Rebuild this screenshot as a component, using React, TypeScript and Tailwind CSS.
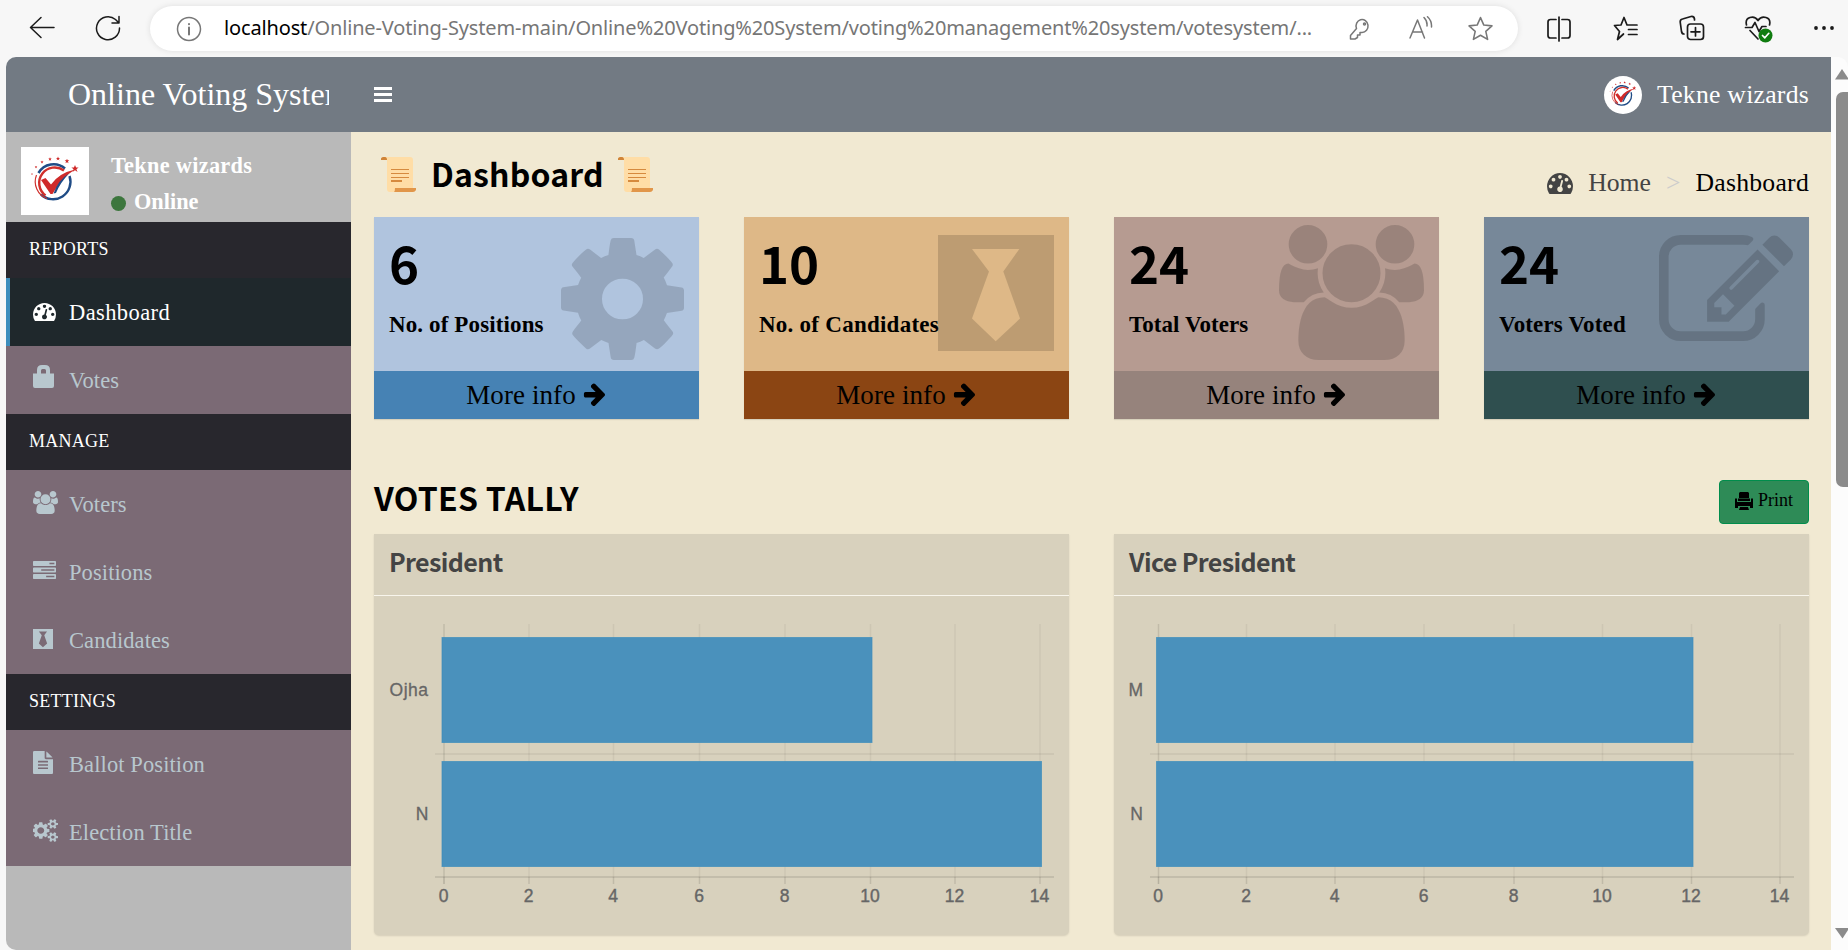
import React from "react";

const P = {
  users:
    "M657 896q-162 5-265 128h-134q-82 0-138-40.5t-56-118.5q0-353 124-353 6 0 43.5 21t97.5 42.5 119 21.5q67 0 133-23-5 37-5 66 0 139 81 256zm1071 637q0 120-73 189.5t-194 69.5h-874q-121 0-194-69.5t-73-189.5q0-53 3.5-103.5t14-109 26.5-108.5 43-97.5 62-81 85.5-53.5 111.5-20q10 0 43 21.5t73 48 107 48 135 21.5 135-21.5 107-48 73-48 43-21.5q61 0 111.5 20t85.5 53.5 62 81 43 97.5 26.5 108.5 14 109 3.5 103.5zm-1024-1277q0 106-75 181t-181 75-181-75-75-181 75-181 181-75 181 75 75 181zm704 384q0 159-112.5 271.5t-271.5 112.5-271.5-112.5-112.5-271.5 112.5-271.5 271.5-112.5 271.5 112.5 112.5 271.5zm576 225q0 78-56 118.5t-138 40.5h-134q-103-123-265-128 81-117 81-256 0-29-5-66 66 23 133 23 59 0 119-21.5t97.5-42.5 43.5-21q124 0 124 353zm-128-609q0 106-75 181t-181 75-181-75-75-181 75-181 181-75 181 75 75 181z",
  edit:
    "M888 1184l116-116-152-152-116 116v56h96v96h56zm440-720q-16-16-33 1l-350 350q-17 17-1 33t33-1l350-350q17-17 1-33zm80 594v190q0 119-84.5 203.5t-203.5 84.5h-832q-119 0-203.5-84.5t-84.5-203.5v-832q0-119 84.5-203.5t203.5-84.5h832q63 0 117 25 15 7 18 23 3 17-9 29l-49 49q-14 14-32 8-23-6-45-6h-832q-66 0-113 47t-47 113v832q0 66 47 113t113 47h832q66 0 113-47t47-113v-126q0-13 9-22l64-64q15-15 35-7t20 29zm-96-738l288 288-672 672h-288v-288zm444 132l-92 92-288-288 92-92q28-28 68-28t68 28l152 152q28 28 28 68t-28 68z",
  cog:
    "M1152 896q0-106-75-181t-181-75-181 75-75 181 75 181 181 75 181-75 75-181zm512-109v222q0 12-8 23t-20 13l-185 28q-19 54-39 91 35 50 107 138 10 12 10 25t-9 23q-27 37-99 108t-94 71q-12 0-26-9l-138-108q-44 23-91 38-16 136-29 186-7 28-36 28h-222q-14 0-24.5-8.5t-11.5-21.5l-28-184q-49-16-90-37l-141 107q-10 9-25 9-14 0-25-11-126-114-165-168-7-10-7-23 0-12 8-23 15-21 51-66.5t54-70.5q-27-50-41-99l-183-27q-13-2-21-12.5t-8-23.5v-222q0-12 8-23t19-13l186-28q14-46 39-92-40-57-107-138-10-12-10-24 0-10 9-23 26-36 98.5-107.5t94.5-71.5q13 0 26 10l138 107q44-23 91-38 16-136 29-186 7-28 36-28h222q14 0 24.5 8.5t11.5 21.5l28 184q49 16 90 37l142-107q9-9 24-9 13 0 25 10 129 119 165 170 7 8 7 22 0 12-8 23-15 21-51 66.5t-54 70.5q26 50 41 98l183 28q13 2 21 12.5t8 23.5z",
  gauge:
    "M384 1152q0-53-37.5-90.5t-90.5-37.5-90.5 37.5-37.5 90.5 37.5 90.5 90.5 37.5 90.5-37.5 37.5-90.5zm192-448q0-53-37.5-90.5t-90.5-37.5-90.5 37.5-37.5 90.5 37.5 90.5 90.5 37.5 90.5-37.5 37.5-90.5zm428 481l101-382q6-26-7.5-48.5t-38.5-29.5-48 6.5-30 39.5l-101 382q-60 5-107 43.5t-63 98.5q-20 77 20 146t117 89 146-20 89-117q16-60-6-117t-72-91zm660-33q0-53-37.5-90.5t-90.5-37.5-90.5 37.5-37.5 90.5 37.5 90.5 90.5 37.5 90.5-37.5 37.5-90.5zm-640-640q0-53-37.5-90.5t-90.5-37.5-90.5 37.5-37.5 90.5 37.5 90.5 90.5 37.5 90.5-37.5 37.5-90.5zm448 192q0-53-37.5-90.5t-90.5-37.5-90.5 37.5-37.5 90.5 37.5 90.5 90.5 37.5 90.5-37.5 37.5-90.5zm320 448q0 261-141 483-19 29-54 29h-1402q-35 0-54-29-141-221-141-483 0-182 71-348t191-286 286-191 348-71 348 71 286 191 191 286 71 348z",
  tasks:
    "M1024 1408h640v-128h-640v128zm-384-512h1024v-128h-1024v128zm640-512h384v-128h-384v128zm512 832v256q0 26-19 45t-45 19h-1664q-26 0-45-19t-19-45v-256q0-26 19-45t45-19h1664q26 0 45 19t19 45zm0-512v256q0 26-19 45t-45 19h-1664q-26 0-45-19t-19-45v-256q0-26 19-45t45-19h1664q26 0 45 19t19 45zm0-512v256q0 26-19 45t-45 19h-1664q-26 0-45-19t-19-45v-256q0-26 19-45t45-19h1664q26 0 45 19t19 45z",
  file:
    "M1596 476q14 14 28 36h-472v-472q22 14 36 28zm-476 164h544v1056q0 40-28 68t-68 28h-1344q-40 0-68-28t-28-68v-1600q0-40 28-68t68-28h800v544q0 40 28 68t68 28zm160 736v-64q0-14-9-23t-23-9h-704q-14 0-23 9t-9 23v64q0 14 9 23t23 9h704q14 0 23-9t9-23zm0-256v-64q0-14-9-23t-23-9h-704q-14 0-23 9t-9 23v64q0 14 9 23t23 9h704q14 0 23-9t9-23zm0-256v-64q0-14-9-23t-23-9h-704q-14 0-23 9t-9 23v64q0 14 9 23t23 9h704q14 0 23-9t9-23z",
  cogs:
    "M832 896q0-106-75-181t-181-75-181 75-75 181 75 181 181 75 181-75 75-181zm768 512q0-52-38-90t-90-38-90 38-38 90q0 53 37.5 90.5t90.5 37.5 90.5-37.5 37.5-90.5zm0-1024q0-52-38-90t-90-38-90 38-38 90q0 53 37.5 90.5t90.5 37.5 90.5-37.5 37.5-90.5zm-384 421v185q0 10-7 19.5t-16 10.5l-155 24q-11 35-32 76 34 48 90 115 7 11 7 20 0 12-7 19-23 30-82.5 89.5t-78.5 59.5q-11 0-21-7l-115-90q-37 19-77 31-11 108-23 155-7 24-30 24h-186q-11 0-20-7.5t-10-17.5l-23-153q-34-10-75-31l-118 89q-7 7-20 7-11 0-21-8-144-133-144-160 0-9 7-19 10-14 41-53t47-61q-23-44-35-82l-152-24q-10-1-17-9.5t-7-19.5v-185q0-10 7-19.5t16-10.5l155-24q11-35 32-76-34-48-90-115-7-11-7-20 0-12 7-20 22-30 82-89t79-59q11 0 21 7l115 90q34-18 77-32 11-108 23-154 7-24 30-24h186q11 0 20 7.5t10 17.5l23 153q34 10 75 31l118-89q8-7 20-7 11 0 21 8 144 133 144 160 0 8-7 19-12 16-42 54t-45 60q23 48 34 82l152 23q10 2 17 10.5t7 19.5zm640 533v140q0 16-149 31-12 27-30 52 51 113 51 138 0 4-4 7-122 71-124 71-8 0-46-47t-52-68q-20 2-30 2t-30-2q-14 21-52 68t-46 47q-2 0-124-71-4-3-4-7 0-25 51-138-18-25-30-52-149-15-149-31v-140q0-16 149-31 13-29 30-52-51-113-51-138 0-4 4-7 4-2 35-20t59-34 30-16q8 0 46 46.5t52 67.5q20-2 30-2t30 2q51-71 92-112l6-2q4 0 124 70 4 3 4 7 0 25-51 138 17 23 30 52 149 15 149 31zm0-1024v140q0 16-149 31-12 27-30 52 51 113 51 138 0 4-4 7-122 71-124 71-8 0-46-47t-52-68q-20 2-30 2t-30-2q-14 21-52 68t-46 47q-2 0-124-71-4-3-4-7 0-25 51-138-18-25-30-52-149-15-149-31v-140q0-16 149-31 13-29 30-52-51-113-51-138 0-4 4-7 4-2 35-20t59-34 30-16q8 0 46 46.5t52 67.5q20-2 30-2t30 2q51-71 92-112l6-2q4 0 124 70 4 3 4 7 0 25-51 138 17 23 30 52 149 15 149 31z",
  arrow:
    "M1600 960q0 54-37 91l-651 651q-39 37-91 37-51 0-90-37l-75-75q-38-38-38-91t38-91l293-293h-704q-52 0-84.5-37.5t-32.5-90.5v-128q0-53 32.5-90.5t84.5-37.5h704l-293-294q-38-36-38-90t38-90l75-75q38-38 90-38 53 0 91 38l651 651q37 35 37 90z",
  tie: "M0 0h116v116h-116zM34 14L51 36.5L34 83.5L57.700 106.300L82 83.500L65.300 36.500L81.300 14z",
  lock: "M4 8.500V5Q4 0 9 0H12Q17 0 17 5V8.500H21V21Q21 23 19 23H2Q0 23 0 21V8.500zM8 8.500H13V5.500Q13 4 11.500 4H9.500Q8 4 8 5.500z",
};

function Icon({ d, box, className }: { d: string; box: string; className: string }) {
  return (
    <svg viewBox={box} className={className} fill="currentColor" fillRule="evenodd" preserveAspectRatio="none">
      <path d={d} />
    </svg>
  );
}

function Logo({ className }: { className: string }) {
  const stars = [
    [11, 27, 1], [15, 20, 1.300], [21, 15, 1.600], [29, 12, 1.800], [37, 11.500, 2], [46, 14, 2.300], [54, 21.500, 3.600],
  ];
  return (
    <svg viewBox="0 0 68 68" className={className}>
      <rect width="68" height="68" fill="#fff" />
      <path d="M17.500 26A17.500 17.500 0 0 1 44 21.500" fill="none" stroke="#1f4c86" strokeWidth="2.600" />
      <path d="M48.500 29A17.500 17.500 0 0 1 20 47.500" fill="none" stroke="#1f4c86" strokeWidth="2.400" />
      <path d="M43 23.500A15.500 15.500 0 1 0 24.500 48.500" fill="none" stroke="#d0312d" strokeWidth="2.400" />
      <path d="M15.500 28A18 18 0 0 0 26 51.500" fill="none" stroke="#d0312d" strokeWidth="1.200" />
      <path d="M20 33l4.500-2 5.500 6.500Q38 26 54 22.500Q40 31 31.500 47h-2z" fill="#cf2a2a" />
      <path d="M32.500 46.500Q37 33 48 26.500Q39 36 35 46z" fill="#1f4c86" />
      {stars.map(([x, y, r]) => (
        <path
          key={x}
          d={`M${x} ${y - r}l${r * 0.3} ${r * 0.7}h${r * 0.7}l${-r * 0.6} ${r * 0.5}l${r * 0.3} ${r * 0.8}l${-r * 0.7} ${-r * 0.5}l${-r * 0.7} ${r * 0.5}l${r * 0.3} ${-r * 0.8}l${-r * 0.6} ${-r * 0.5}h${r * 0.7}z`}
          fill="#cf2a2a"
        />
      ))}
    </svg>
  );
}

function Scroll() {
  return (
    <svg viewBox="0 0 35 35" className="h-[35px] w-[35px] shrink-0">
      <path d="M0 3V1.500Q.5 0 2 0H5Q6.500 0 6.500 3z" fill="#d08438" />
      <path d="M5 0H29Q32 0 32 3V31.500H14V35H9Q6 35 6 32V3Q6 0 4 0z" fill="#ffdda6" />
      <path d="M14 31H35V33Q34 35 32 35H13Q14 34 14 31z" fill="#e1964a" />
      <path d="M10 12.500h18M10 16.500h18M10 20.500h18" stroke="#d68a3e" strokeWidth="1" />
      <path d="M10 24h11" stroke="#d68a3e" strokeWidth="2" />
    </svg>
  );
}

const line = { fill: "none", stroke: "currentColor", strokeWidth: 1.5, strokeLinecap: "round", strokeLinejoin: "round" } as const;
const STAR = "M12 1.500l3.200 7.200 7.800.8-5.900 5.200 1.700 7.800L12 18.500l-6.800 4 1.700-7.800L1 9.500l7.800-.8z";

function BrowserBar() {
  return (
    <div className="flex h-[57px] shrink-0 items-start bg-[#f7f7f7] text-[#1b1b1b]">
      <svg viewBox="0 0 26 26" className="mt-[15px] ml-[29px] h-[26px] w-[26px] shrink-0" {...line}>
        <path d="M1.500 12.500H25M12 2.500L1.500 12.500L12 22.500" />
      </svg>
      <svg viewBox="0 0 26 26" className="mt-[15px] ml-[40px] h-[26px] w-[26px] shrink-0" {...line}>
        <path d="M24.500 13A11.500 11.500 0 1 1 20.500 4.500L23.500 7.500M24 1.500V8H17" />
      </svg>
      <div className="mt-[6px] ml-[29px] flex h-[45px] w-[1368px] shrink-0 items-start rounded-full bg-white text-[#777] shadow-[0_0_6px_rgba(0,0,0,0.1)]">
        <svg viewBox="0 0 26 26" className="mt-[10px] ml-[26px] h-[26px] w-[26px] shrink-0" {...line}>
          <circle cx="13" cy="13" r="11.500" />
          <path d="M13 11.500V18.500M13 8V8.200" strokeWidth="2" />
        </svg>
        <div className="ml-[22px] w-[1096px] whitespace-nowrap font-['Noto_Sans'] text-[20px] leading-[44px] tracking-[-0.150px] text-[#767676]">
          <span className="text-black">localhost</span>/Online-Voting-System-main/Online%20Voting%20System/voting%20management%20system/votesystem/...
        </div>
        <svg viewBox="0 0 22 24" className="mt-[11px] ml-[29px] h-[24px] w-[22px] shrink-0" {...line}>
          <path d="M7.500 11.500A6 6.500 0 1 1 13 15.500H11V18H8.500V20.500L6 22H1.500V18.500z" />
          <circle cx="15.500" cy="7" r="1" />
        </svg>
        <svg viewBox="0 0 24 24" className="mt-[10px] ml-[38px] h-[24px] w-[24px] shrink-0" {...line}>
          <path d="M1 22L8.500 4L15.500 22M4 16H13.500M15 1.500Q18.500 5 18 10M18.500 .8Q23 5 22.500 11" />
        </svg>
        <svg viewBox="0 0 24 24" className="mt-[10px] ml-[35px] h-[25px] w-[25px] shrink-0" {...line}>
          <path d={STAR} />
        </svg>
      </div>
      <svg viewBox="0 0 26 26" className="mt-[16px] ml-[28px] h-[26px] w-[26px] shrink-0" {...line} strokeWidth="1.700">
        <path d="M13 1V25M10 3.500H4.500Q2 3.500 2 6V19.500Q2 22 4.500 22H10M16 3.500H21.500Q24 3.500 24 6V19.500Q24 22 21.500 22H16" />
      </svg>
      <svg viewBox="0 0 26 26" className="mt-[16px] ml-[41px] h-[26px] w-[26px] shrink-0" {...line} strokeWidth="1.700">
        <path d="M10.500 18L4.500 23.500L6.500 15.500L1.500 9.500L8 9L11 1.500L14 9H24M15.500 13.500H24M15.500 18.500H24" />
      </svg>
      <svg viewBox="0 0 26 26" className="mt-[15px] ml-[40px] h-[26px] w-[26px] shrink-0" {...line} strokeWidth="1.700">
        <path d="M5 19Q3 19 2.500 16.500L1.200 7Q1 4.500 3.500 4L12 1.500Q15 1 15.500 4V5" />
        <rect x="8.500" y="9" width="16" height="15.500" rx="3" />
        <path d="M16.500 12.500V21M12 16.800H21" />
      </svg>
      <svg viewBox="0 0 30 28" className="mt-[15px] ml-[39px] h-[28px] w-[30px] shrink-0" {...line} strokeWidth="1.700">
        <path d="M2.500 10Q1 4 6 2.500Q11 1 14 5.500Q17 1 22 2.500Q27 4 25.500 10M1.500 12.500H8L11 7.500L15 16.500L18 11.500H22M6 15.500L14 24" />
        <circle cx="21.500" cy="20.500" r="7" fill="#107c10" stroke="none" />
        <path d="M18.500 20.500l2.300 2.300 4-4.500" stroke="#fff" />
      </svg>
      <svg viewBox="0 0 22 6" className="mt-[25px] ml-[39px] h-[6px] w-[22px] shrink-0" fill="currentColor">
        <circle cx="3" cy="3" r="1.900" />
        <circle cx="11" cy="3" r="1.900" />
        <circle cx="19" cy="3" r="1.900" />
      </svg>
    </div>
  );
}

function NavHead({ text }: { text: string }) {
  return (
    <div className="h-[56px] bg-[#28272d] pl-[23px] text-[18px] leading-[55px] tracking-[0.250px] text-white">{text}</div>
  );
}

function NavItem({ text, active, children }: { text: string; active?: boolean; children: React.ReactNode }) {
  return (
    <div
      className={
        active
          ? "flex h-[68px] items-center border-l-4 border-[#3c8dbc] bg-[#1f282c] pl-[23px] text-white"
          : "flex h-[68px] items-center bg-[#7b6a75] pl-[27px] text-[#b8c7ce]"
      }
    >
      <div className="flex h-[68px] w-[36px] shrink-0 items-start">{children}</div>
      <span
        className={
          active
            ? "text-[22.500px] leading-[67px] tracking-[0.400px] whitespace-nowrap"
            : "text-[22.500px] leading-[67px] tracking-[0.100px] whitespace-nowrap"
        }
      >
        {text}
      </span>
    </div>
  );
}

function Sidebar() {
  return (
    <aside className="flex w-[345px] shrink-0 flex-col bg-[#b9b9b9]">
      <div className="flex h-[90px] items-start pt-[15px] pl-[15px] font-bold text-white">
        <Logo className="h-[68px] w-[68px] shrink-0" />
        <div className="mt-[1px] ml-[22px] flex flex-col text-[22.300px] whitespace-nowrap">
          <span className="h-[36px] leading-[36px] tracking-[0.300px]">Tekne wizards</span>
          <div className="flex h-[36px] items-center leading-[36px]">
            <span className="mt-[2px] mr-[8px] h-[15px] w-[15px] rounded-full bg-[#3c763d]" />
            <span>Online</span>
          </div>
        </div>
      </div>
      <NavHead text="REPORTS" />
      <NavItem text="Dashboard" active>
        <Icon d={P.gauge} box="0 256 1792 1408" className="mt-[25px] h-[18px] w-[23px]" />
      </NavItem>
      <NavItem text="Votes">
        <Icon d={P.lock} box="0 0 21 23" className="mt-[19px] h-[23px] w-[21px]" />
      </NavItem>
      <NavHead text="MANAGE" />
      <NavItem text="Voters">
        <Icon d={P.users} box="64 0 1920 1792" className="mt-[21px] h-[23px] w-[25px]" />
      </NavItem>
      <NavItem text="Positions">
        <Icon d={P.tasks} box="0 128 1792 1408" className="mt-[23px] h-[18px] w-[23px]" />
      </NavItem>
      <NavItem text="Candidates">
        <Icon d={P.tie} box="0 0 116 116" className="mt-[23px] h-[20px] w-[20px]" />
      </NavItem>
      <NavHead text="SETTINGS" />
      <NavItem text="Ballot Position">
        <Icon d={P.file} box="128 0 1536 1792" className="mt-[21px] h-[23px] w-[20px]" />
      </NavItem>
      <NavItem text="Election Title">
        <Icon d={P.cogs} box="0 0 1856 1792" className="mt-[21px] h-[23px] w-[25px]" />
      </NavItem>
    </aside>
  );
}

interface StatProps {
  value: string;
  label: string;
  top: string;
  foot: string;
  labelClass: string;
  children: React.ReactNode;
}

function Stat({ value, label, top, foot, labelClass, children }: StatProps) {
  return (
    <div className="relative flex h-[202px] w-[325px] flex-col text-black shadow-[0_1px_1px_rgba(0,0,0,0.1)]">
      <div className={`h-[154px] pl-[15px] ${top}`}>
        <div className="pt-[15px] font-['Noto_Sans_CJK_SC'] text-[51px] leading-[60px] font-bold">{value}</div>
        <div className={`mt-[18px] text-[23px] leading-[30px] font-bold whitespace-nowrap ${labelClass}`}>{label}</div>
      </div>
      <div className={`flex h-[48px] items-center justify-center gap-[7px] pr-[2px] pb-[1px] ${foot}`}>
        <span className="text-[27px] leading-[46px] tracking-[0.100px]">More info</span>
        <Icon d={P.arrow} box="64 149 1536 1590" className="h-[23px] w-[22px]" />
      </div>
      {children}
    </div>
  );
}

interface ChartProps {
  x: number[];
  from: number;
  to: number;
  labelEnd: number;
  rows: { name: string; value: number }[];
}

function Chart({ x, from, to, labelEnd, rows }: ChartProps) {
  return (
    <svg viewBox="0 0 695 339" className="h-[339px] w-[695px] font-['Liberation_Sans'] text-[17.500px]">
      {x.map((v, i) => (
        <g key={i}>
          <path d={`M${v} 28V288`} stroke="#000" strokeOpacity={i === 0 ? 0.1 : 0.05} strokeWidth="1.500" />
          <path d={`M${v} 281V288`} stroke="#000" strokeOpacity="0.06" strokeWidth="1.500" />
          <text x={v - 0.5} y="305.500" textAnchor="middle" fill="#666" stroke="#666" strokeWidth="0.400">
            {i * 2}
          </text>
        </g>
      ))}
      <path d={`M${from} 158H${to}`} stroke="#000" strokeOpacity="0.07" strokeWidth="1.500" />
      <path d={`M${from} 281H${to}`} stroke="#000" strokeOpacity="0.13" strokeWidth="1.500" />
      {rows.map((r, i) => (
        <g key={r.name}>
          <rect x={x[0] - 2} y={41.500 + i * 124} width={x[r.value / 2] - x[0] + 3.500} height="105" fill="#4a91bc" stroke="#3c8dbc" strokeOpacity="0.700" />
          <text x={labelEnd} y={99.500 + i * 124} textAnchor="end" fill="#666" stroke="#666" strokeWidth="0.300" letterSpacing={r.name.length > 1 ? 0.5 : 0}>
            {r.name}
          </text>
        </g>
      ))}
    </svg>
  );
}

function Panel({ title, children }: { title: string; children: React.ReactNode }) {
  return (
    <div className="flex h-[401px] w-[695px] flex-col rounded-b-[5px] bg-[#d8d1bd] shadow-[0_1px_2px_rgba(0,0,0,0.12)]">
      <div className="h-[62px] border-b border-[#f8f5ec] pl-[15px] font-['Noto_Sans_CJK_SC'] text-[25px] leading-[54px] font-bold tracking-[-0.600px] text-[#444]">
        {title}
      </div>
      {children}
    </div>
  );
}

export default function App() {
  return (
    <div className="flex h-[950px] w-[1848px] flex-col overflow-hidden bg-[#f7f7f7] font-['Liberation_Serif',serif]">
      <BrowserBar />
      <div className="flex h-[893px] pl-[6px]">
        <div className="flex w-[1825px] shrink-0 flex-col overflow-hidden rounded-l-[10px]">
          <header className="flex h-[75px] shrink-0 items-center bg-[#727a83] text-white">
            <div className="w-[323px] shrink-0 overflow-hidden pl-[62px] text-[32px] leading-[75px] whitespace-nowrap">
              Online Voting System
            </div>
            <svg viewBox="0 0 18 15" className="ml-[45px] h-[15px] w-[18px]" fill="currentColor">
              <path d="M0 0h18v3H0zM0 6h18v3H0zM0 12h18v3H0z" />
            </svg>
            <Logo className="mr-[15px] ml-auto h-[38px] w-[38px] rounded-full" />
            <span className="mr-[22px] pt-[1px] text-[25.700px] tracking-[0.250px]">Tekne wizards</span>
          </header>
          <div className="flex h-[818px]">
            <Sidebar />
            <main className="flex w-[1480px] shrink-0 flex-col bg-[#f1e9d2] px-[23px] pr-[22px]">
              <div className="flex h-[85px] items-start justify-between">
                <div className="flex items-start pt-[25px] pl-[7px]">
                  <Scroll />
                  <h1 className="mx-[15px] -mt-[7px] w-[172px] text-center font-['Noto_Sans_CJK_SC'] text-[32px] leading-[46px] font-bold tracking-[0.150px] whitespace-nowrap text-black">
                    Dashboard
                  </h1>
                  <Scroll />
                </div>
                <div className="flex items-center pt-[31px] text-[25.700px] leading-[40px] text-[#444]">
                  <Icon d={P.gauge} box="0 256 1792 1408" className="h-[21px] w-[26px]" />
                  <span className="ml-[15px]">Home</span>
                  <span className="mx-[15px] text-[#ccc]">&gt;</span>
                  <span className="tracking-[0.250px] text-black">Dashboard</span>
                </div>
              </div>
              <div className="flex justify-between">
                <Stat value="6" label="No. of Positions" top="bg-[#b0c4de]" foot="bg-[#4682b4]" labelClass="tracking-[0.120px]">
                  <Icon d={P.cog} box="128 128 1536 1536" className="absolute top-[21px] right-[15px] h-[122px] w-[123px] text-black/15" />
                </Stat>
                <Stat value="10" label="No. of Candidates" top="bg-[#deb887]" foot="bg-[#8b4513]" labelClass="tracking-[0.250px]">
                  <Icon d={P.tie} box="0 0 116 116" className="absolute top-[18px] right-[15px] h-[116px] w-[116px] text-black/15" />
                </Stat>
                <Stat value="24" label="Total Voters" top="bg-[#b69b91]" foot="bg-[#96837c]" labelClass="tracking-[0.050px]">
                  <Icon d={P.users} box="64 0 1920 1792" className="absolute top-[8px] right-[15px] h-[135px] w-[145px] text-black/15" />
                </Stat>
                <Stat value="24" label="Voters Voted" top="bg-[#778899]" foot="bg-[#2f4f4f]" labelClass="tracking-[0.150px]">
                  <Icon d={P.edit} box="0 128 1784 1408" className="absolute top-[18px] right-[16px] h-[106px] w-[134px] text-black/15" />
                </Stat>
              </div>
              <div className="flex h-[115px] items-start justify-between pt-[54px]">
                <h2 className="font-['Noto_Sans_CJK_SC'] text-[32px] leading-[48px] font-bold tracking-[0.300px] text-black">VOTES TALLY</h2>
                <button className="mt-[7px] flex h-[44px] w-[90px] items-center justify-center gap-[5px] rounded-[4px] border border-[#008d4c] bg-[#2e8b57] pb-[3px] text-[18px] text-black">
                  <svg viewBox="0 0 18 18" className="h-[18px] w-[18px]" fill="currentColor">
                    <path d="M5 0h8l1 1v5H4V1zM0 6.500h2V10h14V6.500h2V16h-3v-2H3v2H0zM3 6.500h12V9H3zM5 15h8l1 3H4z" />
                  </svg>
                  <span>Print</span>
                </button>
              </div>
              <div className="flex justify-between">
                <Panel title="President">
                  <Chart
                    x={[70, 155, 239.500, 325.500, 411, 496.500, 581, 666]}
                    from={61}
                    to={680}
                    labelEnd={54.500}
                    rows={[{ name: "Ojha", value: 10 }, { name: "N", value: 14 }]}
                  />
                </Panel>
                <Panel title="Vice President">
                  <Chart
                    x={[44.500, 132.500, 221, 310, 400, 488.500, 577.500, 666]}
                    from={36}
                    to={680}
                    labelEnd={29}
                    rows={[{ name: "M", value: 12 }, { name: "N", value: 12 }]}
                  />
                </Panel>
              </div>
            </main>
          </div>
        </div>
        <div className="flex w-[17px] shrink-0 flex-col items-end overflow-hidden rounded-tr-[10px] bg-[#fcfcfc] pt-[12px]">
          <svg viewBox="0 0 13 11" className="h-[11px] w-[13px]">
            <path d="M0 10.500L7 0L13 9V10.500z" fill="#8b8b8b" />
          </svg>
          <div className="mt-[12px] h-[395px] w-[12px] rounded-l-[7px] bg-[#8b8b8b]" />
          <svg viewBox="0 0 13 11" className="mt-[441px] h-[11px] w-[13px]">
            <path d="M0 0H13V2L7.500 10.500z" fill="#8b8b8b" />
          </svg>
        </div>
      </div>
    </div>
  );
}
